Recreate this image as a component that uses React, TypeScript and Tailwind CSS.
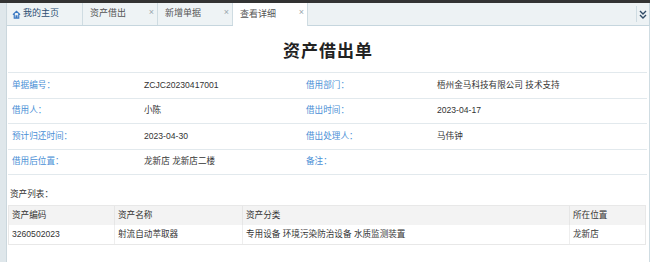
import React from "react";

const font = { fontFamily: '"Liberation Sans", "Noto Sans CJK SC", sans-serif' };

const tabs = [
  { name: "我的主页", home: true },
  { name: "资产借出" },
  { name: "新增单据" },
  { name: "查看详细", active: true },
];

const rows = [
  ["单据编号：", "ZCJC20230417001", "借用部门：", "梧州金马科技有限公司 技术支持"],
  ["借用人：", "小陈", "借出时间：", "2023-04-17"],
  ["预计归还时间：", "2023-04-30", "借出处理人：", "马伟钟"],
  ["借用后位置：", "龙新店 龙新店二楼", "备注：", ""],
];

const HomeIcon = () => (
  <svg width="9" height="9" viewBox="0 0 10 10" fill="none" stroke="#3a78c2" strokeWidth="1.3">
    <path d="M1 5.2 5 1.5l4 3.7M2.5 4.2V9h2V6.5h1V9h2V4.2" />
  </svg>
);

const App = () => {
  return (
    <div className="w-[655px] h-[262px] bg-white overflow-hidden text-[#333]" style={font}>
      <div className="h-[3px] w-[650px] bg-[#333]" />
      <div className="flex h-[259px]">
        {/* left strip */}
        <div className="w-[7px] bg-[#dfe7eb] border-r border-[#cbd7dd]" />
        <div className="w-[643px] flex flex-col">
          {/* Tab bar */}
          <div className="h-[23px] flex items-end bg-[#edf2f4] border-b border-[#c6d6de] border-r pl-[1px] relative">
            {tabs.map((t) => (
              <div
                key={t.name}
                className={`relative h-[22px] w-[75px] flex items-center gap-[2px] text-[9px] border-r border-[#cfdce2] ${
                  t.active ? "bg-white h-[23px] -mb-px" : "bg-[#eef3f5]"
                } ${t.home ? "w-[65px] pl-[4px] text-[#2d4f73]" : "pl-[7px] text-[#555]"}`}
              >
                {t.home && <HomeIcon />}
                <span>{t.name}</span>
                {!t.home && (
                  <span className="absolute right-[3px] top-[5px] text-[9px] leading-none text-[#9aa6ad]">×</span>
                )}
              </div>
            ))}
            <div className="absolute right-[1px] top-[3px] w-[12px] h-[16px] border-l border-[#cfdce2] flex items-center justify-center">
              <svg width="8" height="9" viewBox="0 0 8 9" fill="none" stroke="#2f4a66" strokeWidth="1.4">
                <path d="M1 1l3 3 3-3M1 5l3 3 3-3" />
              </svg>
            </div>
          </div>

          {/* Content */}
          <div className="flex-1 border-r border-[#cfdce2] px-[1px]">
            <h1 className="text-[17px] font-bold text-center text-[#222] pt-[13px] h-[46px] tracking-[1px]">资产借出单</h1>
            <div className="w-[639px]">
              {rows.map((r, i) => (
                <div
                  key={i}
                  className="grid grid-cols-[136px_155px_138px_210px] h-[25.5px] items-center border-t border-[#e2e9ed] text-[8.6px]"
                >
                  <span className="pl-[4px] text-[#4a8fd6]">{r[0]}</span>
                  <span>{r[1]}</span>
                  <span className="pl-[7px] text-[#4a8fd6]">{r[2]}</span>
                  <span>{r[3]}</span>
                </div>
              ))}
              <div className="border-t border-[#e2e9ed]" />
            </div>

            <div className="text-[8.6px] pl-[2px] pt-[13px] h-[30px]">资产列表：</div>
            <div className="w-[638px] border border-[#e8e8e8] text-[8.6px]">
              <div className="grid grid-cols-[105px_128px_327px_78px] h-[19px] items-center bg-[#f3f3f3]">
                <span className="pl-[3px]">资产编码</span>
                <span className="pl-[3px] h-full flex items-center border-l border-[#e6e6e6]">资产名称</span>
                <span className="pl-[3px] h-full flex items-center border-l border-[#e6e6e6]">资产分类</span>
                <span className="pl-[3px] h-full flex items-center border-l border-[#e6e6e6]">所在位置</span>
              </div>
              <div className="grid grid-cols-[105px_128px_327px_78px] h-[19px] items-center">
                <span className="pl-[3px]">3260502023</span>
                <span className="pl-[3px] h-full flex items-center border-l border-[#eeeeee]">射流自动萃取器</span>
                <span className="pl-[3px] h-full flex items-center border-l border-[#eeeeee]">专用设备 环境污染防治设备 水质监测装置</span>
                <span className="pl-[3px] h-full flex items-center border-l border-[#eeeeee]">龙新店</span>
              </div>
            </div>
          </div>
        </div>
      </div>
    </div>
  );
};

export default App;
